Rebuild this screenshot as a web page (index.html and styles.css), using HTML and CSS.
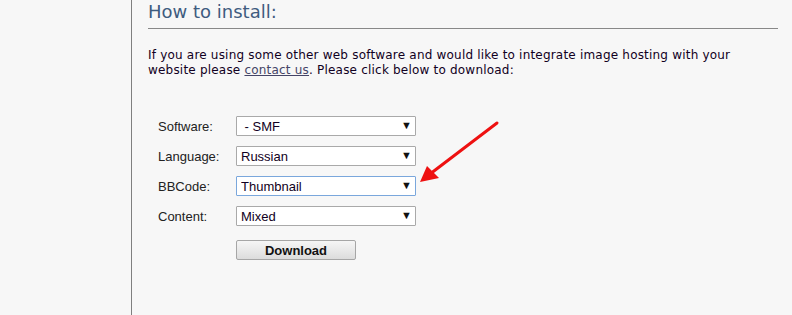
FILE: index.html
```html
<!DOCTYPE html>
<html lang="en">
<head>
    <meta charset="UTF-8">
    <meta name="viewport" content="width=device-width, initial-scale=1.0">
    <link rel="stylesheet" href="styles.css">
</head>
<body>
<div class="page">
    <div class="sidebar"></div>
    <div class="content">
        <h2 class="title">How to install:</h2>
        <p class="intro">If you are using some other web software and would like to integrate image hosting with your website please <a href="#">contact us</a>. Please click below to download:</p>

        <div class="form">
            <div class="form-row">
                <label for="software">Software:</label>
                <div class="select-box">
                    <select id="software">
                        <option>&nbsp;- SMF</option>
                    </select>
                </div>
            </div>
            <div class="form-row">
                <label for="language">Language:</label>
                <div class="select-box">
                    <select id="language">
                        <option>Russian</option>
                    </select>
                </div>
            </div>
            <div class="form-row">
                <label for="bbcode">BBCode:</label>
                <div class="select-box focused">
                    <select id="bbcode">
                        <option>Thumbnail</option>
                    </select>
                </div>
            </div>
            <div class="form-row">
                <label for="content">Content:</label>
                <div class="select-box">
                    <select id="content">
                        <option>Mixed</option>
                    </select>
                </div>
            </div>
            <div class="form-row">
                <span class="spacer"></span>
                <button class="download-button">Download</button>
            </div>
        </div>

        <!-- red arrow pointing at the bbcode select -->
        <svg class="arrow" width="90" height="70" viewBox="0 0 90 70">
            <line x1="82" y1="5" x2="15" y2="56" stroke="#ee1111" stroke-width="3" stroke-linecap="round"/>
            <polygon points="5,64 12,48 24,60" fill="#ee1111"/>
        </svg>
    </div>
</div>
</body>
</html>
```

FILE: styles.css
```css
body {
    margin: 0;
    background-color: #F7F7F7;
    font-family: "DejaVu Sans", Verdana, sans-serif;
}

.page {
    display: flex;
    height: 315px;
}

.sidebar {
    width: 131px;
    border-right: 1px solid #7f7f7f;
    flex-shrink: 0;
}

.content {
    position: relative;
    flex: 1;
    padding: 0 14px 0 16px;
}

.title {
    margin: 0;
    padding: 1px 0 5px 0;
    font-size: 18px;
    font-weight: normal;
    color: #3f5c7f;
    border-bottom: 1px solid #888888;
    line-height: 22px;
}

.intro {
    margin: 19px 0 0 0;
    font-size: 12px;
    letter-spacing: 0.2px;
    line-height: 15px;
    color: #110022;
}

.intro a {
    color: #444466;
}

.form {
    margin: 33px 0 0 10px;
    font-family: "Liberation Sans", Arial, sans-serif;
    font-size: 13px;
}

.form-row {
    display: flex;
    align-items: center;
    height: 30px;
}

.form-row label,
.spacer {
    width: 78px;
    color: #222222;
}

.select-box {
    position: relative;
    width: 180px;
}

.select-box select {
    appearance: none;
    width: 100%;
    height: 20px;
    padding: 0 0 0 4px;
    border: 1px solid #a9a9a9;
    border-radius: 1px;
    background-color: #FFFFFF;
    font-family: "Liberation Sans", Arial, sans-serif;
    font-size: 13px;
    color: #110022;
}

.select-box.focused select {
    border-color: #7aa7dc;
}

.select-box:after {
    content: "\25BC";
    position: absolute;
    right: 4px;
    top: 3px;
    font-size: 11px;
    color: #111111;
    pointer-events: none;
}

.download-button {
    width: 120px;
    height: 20px;
    margin-top: 8px;
    padding: 0;
    border: 1px solid #a6a6a6;
    border-radius: 2px;
    background: linear-gradient(#f6f6f6, #dcdcdc);
    font-family: "Liberation Sans", Arial, sans-serif;
    font-size: 13px;
    font-weight: bold;
    color: #111111;
}

.arrow {
    position: absolute;
    left: 283px;
    top: 118px;
}
```
